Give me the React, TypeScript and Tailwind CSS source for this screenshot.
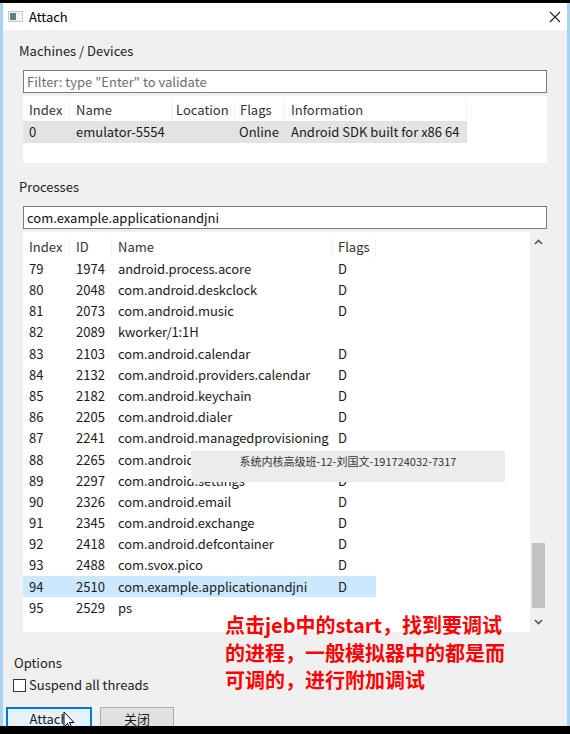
import React from 'react';

const FONT = { fontFamily: '"Noto Sans CJK SC", "Noto Sans", sans-serif' };

const procs: [string, string, string, string][] = [
  ['79', '1974', 'android.process.acore', 'D'],
  ['80', '2048', 'com.android.deskclock', 'D'],
  ['81', '2073', 'com.android.music', 'D'],
  ['82', '2089', 'kworker/1:1H', ''],
  ['83', '2103', 'com.android.calendar', 'D'],
  ['84', '2132', 'com.android.providers.calendar', 'D'],
  ['85', '2182', 'com.android.keychain', 'D'],
  ['86', '2205', 'com.android.dialer', 'D'],
  ['87', '2241', 'com.android.managedprovisioning', 'D'],
  ['88', '2265', 'com.android.phone', 'D'],
  ['89', '2297', 'com.android.settings', 'D'],
  ['90', '2326', 'com.android.email', 'D'],
  ['91', '2345', 'com.android.exchange', 'D'],
  ['92', '2418', 'com.android.defcontainer', 'D'],
  ['93', '2488', 'com.svox.pico', 'D'],
  ['94', '2510', 'com.example.applicationandjni', 'D'],
  ['95', '2529', 'ps', ''],
];

function TitleIcon() {
  return (
    <div className="w-[15px] h-[11px] border border-[#c8c8c8] bg-[#f4f4f4] flex p-[1px]">
      <div className="w-[6px] h-full bg-[#5f7f80]" />
    </div>
  );
}

function CloseIcon() {
  return (
    <svg width="12" height="12" viewBox="0 0 12 12">
      <path d="M1 1 L11 11 M11 1 L1 11" stroke="#222" strokeWidth="1.1" />
    </svg>
  );
}

function Chevron({ up }: { up?: boolean }) {
  return (
    <svg width="9" height="6" viewBox="0 0 9 6">
      <path d={up ? 'M1 5 L4.5 1.5 L8 5' : 'M1 1 L4.5 4.5 L8 1'} stroke="#555" strokeWidth="1.6" fill="none" />
    </svg>
  );
}

function Cursor() {
  return (
    <svg width="12" height="19" viewBox="0 0 12 19" className="absolute left-[60px] top-[708px]">
      <path d="M1 1 L1 16 L4.5 12.5 L7 18 L9 17 L6.5 11.5 L11 11.5 Z" fill="#fff" stroke="#000" strokeWidth="1" />
    </svg>
  );
}

export default function App() {
  return (
    <div className="w-[570px] h-[734px] bg-black flex flex-col overflow-hidden text-[13px] text-[#1a1a1a]" style={FONT}>
      <div className="h-[3px] shrink-0" />
      <div className="relative h-[723px] shrink-0 overflow-hidden bg-[#f0f0f0] border-x-[3px] border-[#a8d2f2] flex flex-col *:shrink-0">
        {/* title bar */}
        <div className="h-[27px] bg-white flex items-center pl-[5px] pr-[6px]">
          <TitleIcon />
          <span className="ml-[6px] text-black">Attach</span>
          <div className="ml-auto">
            <CloseIcon />
          </div>
        </div>

        {/* machines */}
        <div className="ml-[16px] mt-[12px] leading-[18px] text-[#222]">Machines / Devices</div>
        <div className="mx-[20px] mt-[10px] h-[23px] border border-[#7a7a7a] bg-white flex items-center px-[3px] text-[#6d6d6d]">
          Filter: type "Enter" to validate
        </div>
        <div className="mx-[20px] mt-[3px] h-[67px] bg-white pt-[3px]">
          <div className="flex h-[22px] items-center text-[#333]">
            <div className="w-[47px] pl-[6px] border-r border-[#f2f2f2]">Index</div>
            <div className="w-[102px] pl-[6px] border-r border-[#f2f2f2]">Name</div>
            <div className="w-[63px] pl-[4px] border-r border-[#f2f2f2]">Location</div>
            <div className="w-[50px] pl-[5px] border-r border-[#f2f2f2]">Flags</div>
            <div className="w-[182px] pl-[6px] border-r border-[#f2f2f2]">Information</div>
          </div>
          <div className="flex h-[22px] w-[444px] items-center bg-[#e3e3e3]">
            <div className="w-[47px] pl-[6px]">0</div>
            <div className="w-[102px] pl-[6px]">emulator-5554</div>
            <div className="w-[63px] pl-[4px]" />
            <div className="w-[50px] pl-[4px]">Online</div>
            <div className="w-[182px] pl-[6px]">Android SDK built for x86 64</div>
          </div>
        </div>

        {/* processes */}
        <div className="ml-[16px] mt-[15px] leading-[18px] text-[#222]">Processes</div>
        <div className="mx-[20px] mt-[10px] h-[23px] border border-[#7a7a7a] bg-white flex items-center px-[3px] text-[#111]">
          com.example.applicationandjni
        </div>
        <div className="mx-[20px] mt-[3px] h-[400px] flex">
          <div className="flex-1 bg-white pt-[4px]">
            <div className="flex h-[22px] items-center text-[#333]">
              <div className="w-[47px] pl-[6px] border-r border-[#f2f2f2]">Index</div>
              <div className="w-[42px] pl-[6px] border-r border-[#f2f2f2]">ID</div>
              <div className="w-[221px] pl-[6px] border-r border-[#f2f2f2]">Name</div>
              <div className="w-[43px] pl-[5px] border-r border-[#f2f2f2]">Flags</div>
            </div>
            {procs.map((r) => (
              <div
                key={r[0]}
                className={`flex h-[21.2px] w-[353px] items-center ${r[0] === '94' ? 'bg-[#cce8ff]' : ''}`}
              >
                <div className="w-[47px] pl-[6px]">{r[0]}</div>
                <div className="w-[42px] pl-[6px]">{r[1]}</div>
                <div className="w-[221px] pl-[6px] whitespace-nowrap tracking-[-0.1px]">{r[2]}</div>
                <div className="w-[43px] pl-[5px]">{r[3]}</div>
              </div>
            ))}
          </div>
          <div className="w-[17px] bg-[#f0f0f0] flex flex-col items-center">
            <div className="h-[20px] flex items-center">
              <Chevron up />
            </div>
            <div className="flex-1 w-full px-[1px] flex flex-col">
              <div className="flex-1" />
              <div className="h-[65px] bg-[#c2c2c2] mx-[1px]" />
              <div className="h-[4px]" />
            </div>
            <div className="h-[20px] flex items-center">
              <Chevron />
            </div>
          </div>
        </div>

        {/* options */}
        <div className="ml-[11px] mt-[22px] leading-[18px] text-[#222]">Options</div>
        <div className="ml-[10px] mt-[5px] h-[16px] flex items-center">
          <div className="w-[13px] h-[13px] border border-[#333] bg-white" />
          <span className="ml-[3px]">Suspend all threads</span>
        </div>
        <div className="ml-[3px] mt-[14px] flex gap-[8px]">
          <div className="w-[86px] h-[24px] border-2 border-[#0078d7] bg-[#e5f1fb] flex items-center justify-center">Attach</div>
          <div className="w-[74px] h-[24px] border border-[#adadad] bg-[#e1e1e1] flex items-center justify-center">关闭</div>
        </div>

        {/* watermark overlay */}
        <div className="absolute left-[188px] top-[448px] w-[314px] h-[31px] bg-[#ececec] flex justify-center pt-[2px] text-[11px] text-[#333]">
          系统内核高级班-12-刘国文-191724032-7317
        </div>

        {/* annotation */}
        <div className="absolute left-[222px] top-[608px] text-[20px] leading-[27.5px] font-bold text-[#ff0000]">
          点击jeb中的start，找到要调试
          <br />
          的进程，一般模拟器中的都是而
          <br />
          可调的，进行附加调试
        </div>
        <Cursor />
      </div>
      <div className="flex-1" />
    </div>
  );
}
